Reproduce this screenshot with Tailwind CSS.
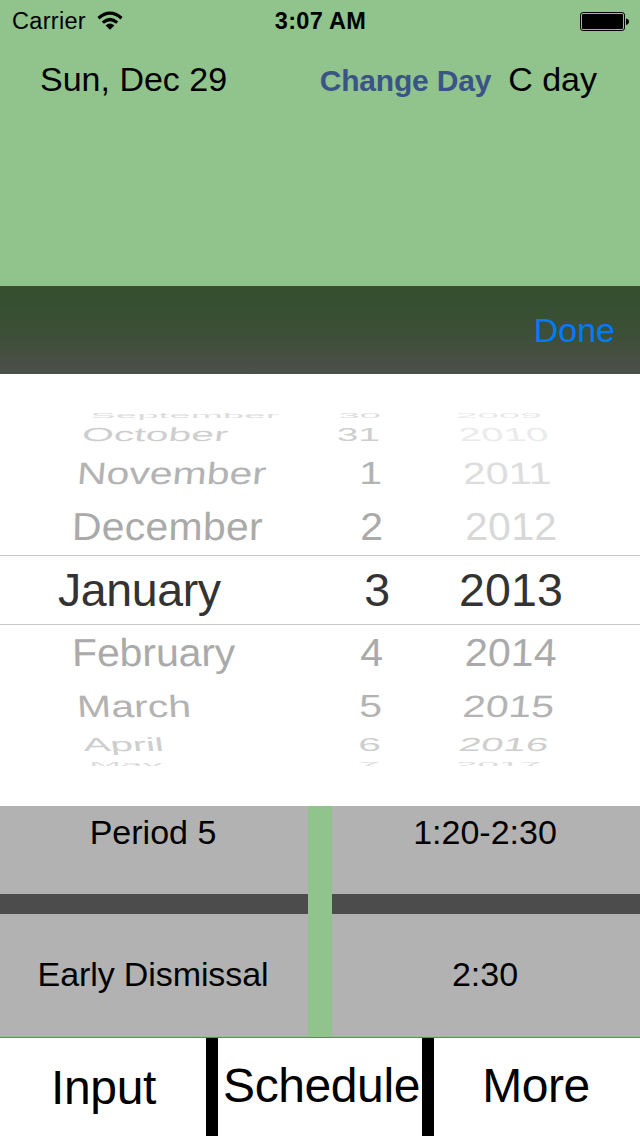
<!DOCTYPE html>
<html lang="en">
<head>
<meta charset="utf-8">
<title>Schedule</title>
<script src="https://cdn.jsdelivr.net/npm/@tailwindcss/browser@4"></script>
</head>
<body class="w-[640px] h-[1136px] overflow-hidden bg-[#91c38c] text-black font-['Liberation_Sans',Arial,sans-serif] flex flex-col whitespace-nowrap">
<header class="h-[286px] shrink-0">
  <div class="h-10 grid grid-cols-3 items-center pl-[12px] pr-[11px] text-[24px] leading-[42px]">
    <div class="flex items-center gap-[11px]">
      <span class="text-[23.5px] tracking-[0.3px]">Carrier</span>
      <svg class="w-[26px] h-[20px]" viewBox="0 0 26 20"><g fill="none" stroke="#000" stroke-width="3.2"><path d="M1.5 7.2Q13 -2.8 24.5 7.2"/><path d="M5.8 11.6Q13 5.4 20.2 11.6"/></g><path d="M8.6 14.4Q13 10.4 17.4 14.4L13 18.7Z"/></svg>
    </div>
    <span class="text-center font-bold text-[23.5px] tracking-[0.3px]">3:07 AM</span>
    <svg class="w-[50px] h-5 justify-self-end relative top-px" viewBox="0 0 50 20"><rect x="1.5" y=".5" width="44" height="18" rx="2.5" fill="none" stroke="#000"/><rect x="3" y="2" width="41" height="15" rx="1"/><path d="M47 6.5Q50 7 50 9.5T47 13Z"/></svg>
  </div>
  <div class="h-[78px] flex items-center pl-[40px] pr-[43px] text-[34px]">
    <span>Sun, Dec 29</span>
    <span class="ml-auto mr-[17px] pt-[3px] text-[30px] font-bold tracking-[-0.2px] text-[#3a5488]">Change Day</span>
    <span>C day</span>
  </div>
</header>
<div class="h-[88px] shrink-0 flex items-center justify-end pr-[25px] bg-linear-to-b from-[#354f2f] from-15% via-[#3e4f39] via-60% to-[#4c4f4a] text-[34px] text-[#007aff]">Done</div>
<main class="h-[432px] shrink-0 bg-white pt-[35px] flex flex-col text-[41px]">
  <div class="h-3 grid grid-cols-[320px_61px_1fr] text-[#dcdcdc] [clip-path:inset(4px_0_0_0)]">
    <span class="h-3 leading-[15px] ml-[90px] origin-left [transform:scale(.94,.19)]">September</span><span class="h-3 leading-[15px] text-right origin-right [transform:scale(.94,.19)]">30</span><span class="h-3 leading-[15px] ml-[75px] origin-left text-[#e8e8e8] [transform:scale(.94,.19)]">2009</span>
  </div>
  <div class="h-[29px] grid grid-cols-[320px_60px_1fr] leading-[27px]">
    <span class="ml-[82px] origin-left text-[#cecece] [transform:skewX(-8deg)_scaleY(.46)]">October</span><span class="text-right origin-right text-[#cecece] [transform:scale(.95,.46)]">31</span><span class="ml-[79px] origin-left text-[#ebebeb] [transform:skewX(12deg)_scale(.98,.46)]">2010</span>
  </div>
  <div class="h-12 grid grid-cols-[320px_62px_1fr] leading-[46px]">
    <span class="ml-[77px] origin-left text-[#b3b3b3] [transform:skewX(-5deg)_scaleY(.75)]">November</span><span class="text-right text-[#b3b3b3] [transform:scaleY(.75)]">1</span><span class="ml-[81px] text-[#dddddd] [transform:skewX(4deg)_scaleY(.75)]">2011</span>
  </div>
  <div class="h-[57px] grid grid-cols-[320px_63px_1fr] leading-[58px]">
    <span class="ml-[72px] tracking-[0.2px] text-[#aaaaaa] [transform:skewX(-1deg)_scaleY(.95)]">December</span><span class="text-right text-[#aaaaaa] [transform:scaleY(.95)]">2</span><span class="ml-[82px] tracking-[0.2px] text-[#d8d8d8] [transform:skewX(2deg)_scaleY(.95)]">2012</span>
  </div>
  <div class="h-[70px] border-y border-[#c8c8c8] grid grid-cols-[320px_70px_1fr] leading-[68px] text-[46.5px] text-[#333333]">
    <span class="ml-[58px] tracking-[-0.4px]">January</span><span class="text-right">3</span><span class="ml-[69px] tracking-[0.1px]">2013</span>
  </div>
  <div class="h-[57px] grid grid-cols-[320px_63px_1fr] leading-[56px] text-[#aaaaaa]">
    <span class="ml-[72px] tracking-[-0.1px] [transform:skewX(1deg)_scaleY(.95)]">February</span><span class="text-right [transform:scaleY(.95)]">4</span><span class="ml-[82px] tracking-[0.2px] [transform:skewX(-2deg)_scaleY(.95)]">2014</span>
  </div>
  <div class="h-12 grid grid-cols-[320px_62px_1fr] leading-[48px] text-[#b3b3b3]">
    <span class="ml-[77px] [transform:skewX(3deg)_scaleY(.75)]">March</span><span class="text-right [transform:scaleY(.75)]">5</span><span class="ml-[81px] [transform:skewX(-5deg)_scaleY(.75)]">2015</span>
  </div>
  <div class="h-[29px] grid grid-cols-[320px_61px_1fr] leading-[30px] text-[#cecece]">
    <span class="ml-[83px] origin-left tracking-[-0.3px] [transform:skewX(8deg)_scaleY(.46)]">April</span><span class="text-right [transform:scaleY(.46)]">6</span><span class="ml-[78px] origin-left [transform:skewX(-12deg)_scale(.98,.46)]">2016</span>
  </div>
  <div class="h-3 grid grid-cols-[320px_60px_1fr] text-[#dcdcdc] [clip-path:inset(0_0_5px_0)]">
    <span class="h-3 leading-[9px] ml-[89px] origin-left [transform:scale(.94,.19)]">May</span><span class="h-3 leading-[9px] text-right [transform:scaleY(.19)]">7</span><span class="h-3 leading-[9px] ml-[76px] origin-left [transform:scale(.94,.19)]">2017</span>
  </div>
</main>
<section class="h-[230px] shrink-0 grid grid-cols-2 grid-rows-[88px_122px] gap-x-6 gap-y-5 text-[34px] text-center leading-[52px]">
  <div class="bg-[#b2b2b2] pr-[2px] shadow-[0_20px_0_#4c4c4c]">Period 5</div>
  <div class="bg-[#b2b2b2] pr-[2px] shadow-[0_20px_0_#4c4c4c]">1:20-2:30</div>
  <div class="bg-[#b2b2b2] pr-[2px] leading-[120px] tracking-[-0.1px]">Early Dismissal</div>
  <div class="bg-[#b2b2b2] pr-[2px] leading-[120px]">2:30</div>
</section>
<div class="h-0.5 shrink-0 border-b border-[#64875f]"></div>
<nav class="h-[98px] shrink-0 bg-black grid grid-cols-[206px_204px_206px] gap-x-3 text-[48px] leading-[96px] text-center">
  <span class="bg-white pt-[2px] pl-[1px] tracking-[-0.4px]">Input</span>
  <span class="bg-white pl-[3px] tracking-[-0.4px]">Schedule</span>
  <span class="bg-white pr-[2px] tracking-[-0.5px]">More</span>
</nav>
</body>
</html>
